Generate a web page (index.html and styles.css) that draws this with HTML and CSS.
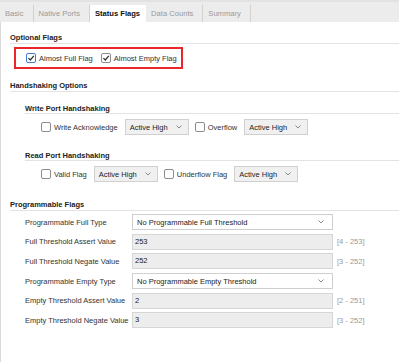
FILE: index.html
```html
<!DOCTYPE html>
<html lang="en">
<head>
    <meta charset="UTF-8">
    <title>Status Flags</title>
    <link rel="stylesheet" href="styles.css">
</head>
<body>
    <div class="tabs">
        <div class="tab">Basic</div>
        <div class="tab">Native Ports</div>
        <div class="tab active">Status Flags</div>
        <div class="tab">Data Counts</div>
        <div class="tab">Summary</div>
    </div>

    <div class="panel">
        <div class="section-title">Optional Flags</div>
        <div class="highlight">
            <label class="check">
                <span class="box focus"><svg viewBox="0 0 8 8"><path d="M1.4 4.1 L3.3 6 L6.8 1.8"/></svg></span>
                Almost Full Flag
            </label>
            <label class="check">
                <span class="box"><svg viewBox="0 0 8 8"><path d="M1.4 4.1 L3.3 6 L6.8 1.8"/></svg></span>
                Almost Empty Flag
            </label>
        </div>

        <div class="section-title spaced">Handshaking Options</div>
        <div class="sub">
            <div class="sub-title">Write Port Handshaking</div>
            <div class="hs-row">
                <span class="box empty"></span>
                <span class="hs-label">Write Acknowledge</span>
                <div class="select small"><span>Active High</span><svg viewBox="0 0 6 4"><path d="M0.5 0.5 L3 3 L5.5 0.5"/></svg></div>
                <span class="box empty"></span>
                <span class="hs-label">Overflow</span>
                <div class="select small"><span>Active High</span><svg viewBox="0 0 6 4"><path d="M0.5 0.5 L3 3 L5.5 0.5"/></svg></div>
            </div>

            <div class="sub-title read">Read Port Handshaking</div>
            <div class="hs-row">
                <span class="box empty"></span>
                <span class="hs-label">Valid Flag</span>
                <div class="select small"><span>Active High</span><svg viewBox="0 0 6 4"><path d="M0.5 0.5 L3 3 L5.5 0.5"/></svg></div>
                <span class="box empty"></span>
                <span class="hs-label">Underflow Flag</span>
                <div class="select small"><span>Active High</span><svg viewBox="0 0 6 4"><path d="M0.5 0.5 L3 3 L5.5 0.5"/></svg></div>
            </div>
        </div>

        <div class="section-title prog">Programmable Flags</div>
        <div class="form">
            <div class="form-row">
                <span class="form-label">Programmable Full Type</span>
                <div class="select wide"><span>No Programmable Full Threshold</span><svg viewBox="0 0 6 4"><path d="M0.5 0.5 L3 3 L5.5 0.5"/></svg></div>
            </div>
            <div class="form-row">
                <span class="form-label">Full Threshold Assert Value</span>
                <div class="input">253</div>
                <span class="range">[4 - 253]</span>
            </div>
            <div class="form-row">
                <span class="form-label">Full Threshold Negate Value</span>
                <div class="input">252</div>
                <span class="range">[3 - 252]</span>
            </div>
            <div class="form-row">
                <span class="form-label">Programmable Empty Type</span>
                <div class="select wide"><span>No Programmable Empty Threshold</span><svg viewBox="0 0 6 4"><path d="M0.5 0.5 L3 3 L5.5 0.5"/></svg></div>
            </div>
            <div class="form-row">
                <span class="form-label">Empty Threshold Assert Value</span>
                <div class="input">2</div>
                <span class="range">[2 - 251]</span>
            </div>
            <div class="form-row">
                <span class="form-label">Empty Threshold Negate Value</span>
                <div class="input">3</div>
                <span class="range">[3 - 252]</span>
            </div>
        </div>
    </div>
</body>
</html>
```

FILE: styles.css
```css
/* Base */
body {
    margin: 0;
    font-family: 'Liberation Sans', Arial, sans-serif;
    font-size: 7.5px;
    color: #333;
    background-color: #fff;
}

/* Tab strip */
.tabs {
    display: flex;
    height: 22px;
    box-sizing: border-box;
    padding-top: 3px;
    background-color: #ececec;
    border-top: 2px solid #e2e2e2;
}

.tab {
    height: 17px;
    line-height: 17px;
    padding: 0 9px 0 5px;
    color: #9a9a9a;
    font-size: 7.6px;
    border-right: 1px solid #d2d2d2;
}

.tab.active {
    height: 19px;
    background-color: #fff;
    color: #111;
    font-weight: bold;
    border-right: none;
    padding: 0 6px 0 5px;
}

/* Panel */
.panel {
    min-height: 340px;
    box-sizing: border-box;
    padding: 11px 0 0 9px;
    border-left: 1px solid #dadada;
}

.section-title {
    font-weight: bold;
    line-height: 9px;
    padding-bottom: 1px;
    color: #222;
    border-bottom: 1px solid #e3e3e3;
}

.section-title.spaced {
    margin-top: 12px;
}

.section-title.prog {
    margin-top: 18px;
}

/* Red highlight around optional flags */
.highlight {
    display: flex;
    align-items: center;
    width: fit-content;
    height: 22px;
    box-sizing: border-box;
    margin: 3px 0 0 4px;
    padding: 0 4px 0 10px;
    border: 2px solid #e8262b;
}

.check {
    display: flex;
    align-items: center;
    margin-right: 8px;
}

.check:last-child {
    margin-right: 0;
}

.box {
    display: inline-flex;
    align-items: center;
    justify-content: center;
    width: 10px;
    height: 10px;
    box-sizing: border-box;
    margin-right: 3px;
    border: 1px solid #8c8c8c;
    border-radius: 2px;
    background-color: #fff;
}

.box.focus {
    border-color: #3f7ad6;
}

.box svg {
    width: 8px;
    height: 8px;
    fill: none;
    stroke: #333;
    stroke-width: 1.3;
}

/* Handshaking */
.sub {
    padding-left: 15px;
}

.sub-title {
    margin-top: 12px;
    font-weight: bold;
    line-height: 9px;
    color: #222;
    border-bottom: 1px solid #e3e3e3;
}

.sub-title.read {
    margin-top: 16px;
}

.hs-row {
    display: flex;
    align-items: center;
    margin-top: 5px;
    padding-left: 16px;
}

.hs-label {
    margin-right: 7px;
}

.select {
    display: flex;
    align-items: center;
    justify-content: space-between;
    height: 16px;
    box-sizing: border-box;
    padding: 0 6px 0 4px;
    border: 1px solid #d0d0d0;
    background-color: #f0f0f0;
    color: #222;
}

.select svg {
    width: 6px;
    height: 4px;
    fill: none;
    stroke: #8a8a8a;
    stroke-width: 1;
}

.select.small {
    width: 64px;
    margin-right: 6px;
}

.select.wide {
    width: 201px;
    padding-right: 8px;
    background-color: #fff;
    border-color: #cfcfcf;
}

/* Programmable flags form */
.form {
    display: flex;
    flex-direction: column;
    gap: 3.7px;
    margin-top: 3px;
    padding-left: 15px;
}

.form-row {
    display: flex;
    align-items: center;
    height: 16px;
}

.form-label {
    width: 107px;
    flex-shrink: 0;
}

.input {
    width: 201px;
    height: 16px;
    line-height: 14px;
    box-sizing: border-box;
    padding-left: 2px;
    border: 1px solid #d6d6d6;
    background-color: #ededed;
    color: #222;
}

.range {
    margin-left: 4px;
    color: #999;
}
```
